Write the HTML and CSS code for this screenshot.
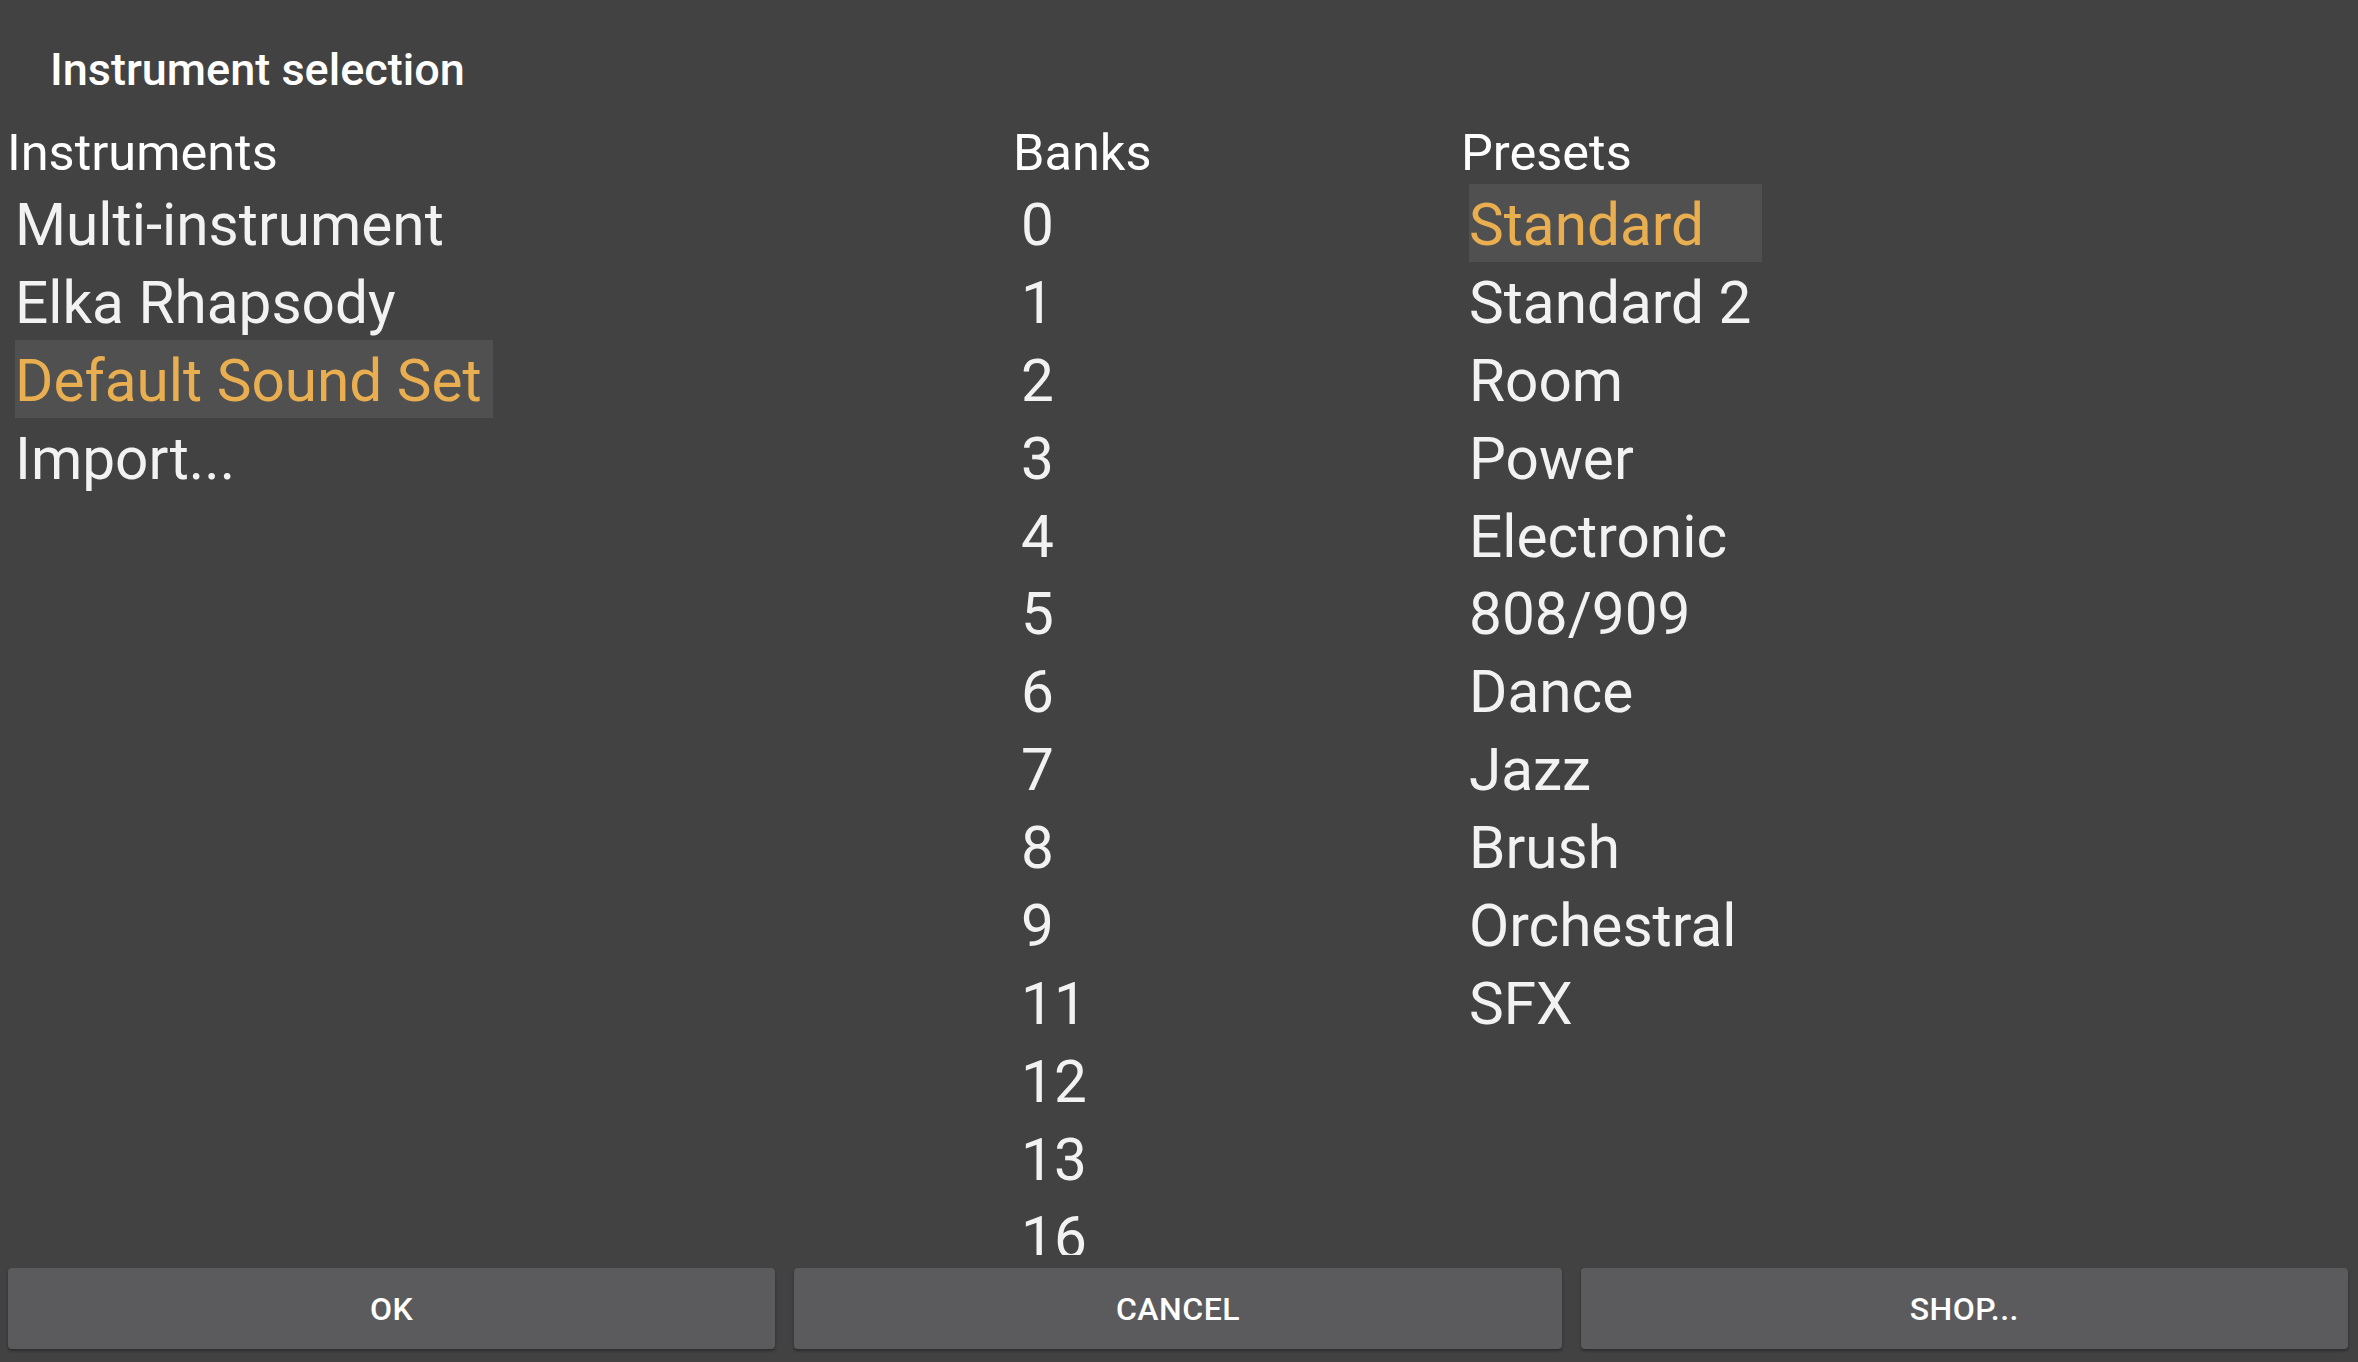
FILE: index.html
```html
<!DOCTYPE html>
<html>
<head>
<meta charset="utf-8">
<link rel="stylesheet" href="styles.css">
</head>
<body>
<div class="dialog">
  <div class="content">
    <div class="title">Instrument selection</div>
    <div class="columns">
      <div class="col">
        <div class="col-head">Instruments</div>
        <div class="list">
          <div class="item">Multi-instrument</div>
          <div class="item">Elka Rhapsody</div>
          <div class="item selected">Default Sound Set</div>
          <div class="item">Import...</div>
        </div>
      </div>
      <div class="col">
        <div class="col-head">Banks</div>
        <div class="list">
          <div class="item">0</div>
          <div class="item">1</div>
          <div class="item">2</div>
          <div class="item">3</div>
          <div class="item">4</div>
          <div class="item">5</div>
          <div class="item">6</div>
          <div class="item">7</div>
          <div class="item">8</div>
          <div class="item">9</div>
          <div class="item">11</div>
          <div class="item">12</div>
          <div class="item">13</div>
          <div class="item">16</div>
        </div>
      </div>
      <div class="col">
        <div class="col-head">Presets</div>
        <div class="list">
          <div class="item selected">Standard</div>
          <div class="item">Standard 2</div>
          <div class="item">Room</div>
          <div class="item">Power</div>
          <div class="item">Electronic</div>
          <div class="item">808/909</div>
          <div class="item">Dance</div>
          <div class="item">Jazz</div>
          <div class="item">Brush</div>
          <div class="item">Orchestral</div>
          <div class="item">SFX</div>
        </div>
      </div>
    </div>
  </div>
  <div class="buttons">
    <button class="btn">OK</button>
    <button class="btn">Cancel</button>
    <button class="btn">Shop...</button>
  </div>
</div>
</body>
</html>
```

FILE: styles.css
```css
html, body {
  margin: 0;
  padding: 0;
  background: #424242;
  font-family: Roboto, "Liberation Sans", sans-serif;
  color: #f2f2f2;
}

.dialog {
  display: flex;
  flex-direction: column;
  height: 1362px;
  width: 2358px;
  overflow: hidden;
}

.content {
  flex: 1;
  min-height: 0;
  overflow: hidden;
  padding-top: 40px;
}

.title {
  font-size: 45px;
  font-weight: 500;
  line-height: 60px;
  color: #ffffff;
  padding-left: 50px;
}

.columns {
  display: grid;
  grid-template-columns: 1006px 448px 1fr;
  padding-left: 7px;
  margin-top: 23px;
}

.col-head {
  font-size: 50.5px;
  line-height: 60px;
  color: #ffffff;
}

.list {
  display: flex;
  flex-direction: column;
  width: max-content;
  margin-left: 8px;
  margin-top: 1px;
}

.item {
  font-size: 58.5px;
  height: 77.9px;
  box-sizing: border-box;
  padding-top: 6px;
  line-height: 71.9px;
  padding-right: 11px;
  white-space: nowrap;
  color: #f2f2f2;
}

.item.selected {
  background: #505050;
  color: #e9ae50;
}

.buttons {
  height: 107px;
  flex: none;
  display: flex;
  gap: 19px;
  padding: 13px 10px 0 8px;
  box-sizing: border-box;
}

.btn {
  flex: 1;
  height: 81px;
  border: none;
  border-radius: 4px;
  background: #5b5b5d;
  box-shadow: 0 2px 3px rgba(0, 0, 0, 0.35);
  color: #ffffff;
  font-family: Roboto, "Liberation Sans", sans-serif;
  font-size: 32px;
  font-weight: 500;
  text-transform: uppercase;
  letter-spacing: 0.5px;
  padding: 0;
}
```
